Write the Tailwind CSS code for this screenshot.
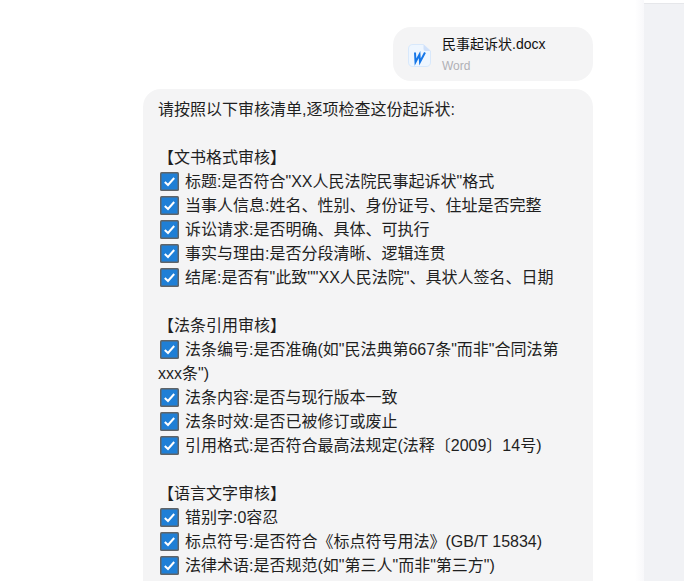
<!DOCTYPE html>
<html lang="en">
<head>
    <meta charset="UTF-8">
    <meta name="viewport" content="width=device-width, initial-scale=1.0">
    <title>民事起诉状审核</title>
    <script src="https://cdn.jsdelivr.net/npm/@tailwindcss/browser@4"></script>
</head>
<body class="h-[581px] overflow-hidden bg-white font-['Liberation_Sans','Noto_Sans_CJK_SC',sans-serif]">
    <svg class="hidden">
        <symbol id="chk" viewBox="0 0 19 19">
            <rect x="0" y="0" width="19" height="19" rx="1.500" fill="#5f6468"/>
            <rect x="1.500" y="1.500" width="16" height="16" rx="0.500" fill="#1f7fd6"/>
            <path d="M4.800 10 L8 13 L14.200 6" fill="none" stroke="#fff" stroke-width="2"/>
        </symbol>
    </svg>
    <div class="flex h-full">
        <main class="w-[635px] shrink-0 pt-[27px] pr-[42px] flex flex-col items-end gap-2">
            <!-- File card -->
            <div class="w-[200px] h-[54px] shrink-0 rounded-[18px] bg-[#f4f4f5] flex items-center pl-[15px] gap-[11px]">
                <svg class="w-[23px] h-[23px] shrink-0 mt-[3px]" viewBox="0 0 23 23">
                    <path d="M5 .500 H15.500 L22.500 7 V18 Q22.500 22.500 18 22.500 H5 Q.500 22.500 .500 18 V5 Q.500 .500 5 .500 Z" fill="#eef6ff" stroke="#d8e8fb"/>
                    <path d="M15.500 .500 L22.500 7 H17.500 Q15.500 7 15.500 5 Z" fill="#cfe0fa"/>
                    <path d="M7 8.500 L7.500 18 L11.500 10.500 L12 18 L17 8.500" fill="none" stroke="#1677e8" stroke-width="2"/>
                </svg>
                <div class="flex flex-col">
                    <span class="text-[14px] leading-[20px] text-[#111]">民事起诉状.docx</span>
                    <span class="text-[12px] leading-[18px] text-[#b0b0b5] mt-[3px]">Word</span>
                </div>
            </div>
            <!-- Message -->
            <div class="w-[450px] shrink-0 rounded-[18px] bg-[#f4f4f5] pt-[9px] pb-[40px] pl-[15px] pr-[16px] text-[16px] leading-[24px] text-[#1f1f1f]">
                <p>请按照以下审核清单,逐项检查这份起诉状:</p>
                <p class="mt-[24px]">【文书格式审核】</p>
                <p><svg class="inline-block w-[19px] h-[19px] ml-[2px] mr-[6px] align-[-4px]"><use href="#chk"/></svg>标题:是否符合"XX人民法院民事起诉状"格式</p>
                <p><svg class="inline-block w-[19px] h-[19px] ml-[2px] mr-[6px] align-[-4px]"><use href="#chk"/></svg>当事人信息:姓名、性别、身份证号、住址是否完整</p>
                <p><svg class="inline-block w-[19px] h-[19px] ml-[2px] mr-[6px] align-[-4px]"><use href="#chk"/></svg>诉讼请求:是否明确、具体、可执行</p>
                <p><svg class="inline-block w-[19px] h-[19px] ml-[2px] mr-[6px] align-[-4px]"><use href="#chk"/></svg>事实与理由:是否分段清晰、逻辑连贯</p>
                <p><svg class="inline-block w-[19px] h-[19px] ml-[2px] mr-[6px] align-[-4px]"><use href="#chk"/></svg>结尾:是否有"此致""XX人民法院"、具状人签名、日期</p>
                <p class="mt-[24px]">【法条引用审核】</p>
                <p><svg class="inline-block w-[19px] h-[19px] ml-[2px] mr-[6px] align-[-4px]"><use href="#chk"/></svg>法条编号:是否准确(如"民法典第667条"而非"合同法第<br>xxx条")</p>
                <p><svg class="inline-block w-[19px] h-[19px] ml-[2px] mr-[6px] align-[-4px]"><use href="#chk"/></svg>法条内容:是否与现行版本一致</p>
                <p><svg class="inline-block w-[19px] h-[19px] ml-[2px] mr-[6px] align-[-4px]"><use href="#chk"/></svg>法条时效:是否已被修订或废止</p>
                <p><svg class="inline-block w-[19px] h-[19px] ml-[2px] mr-[6px] align-[-4px]"><use href="#chk"/></svg>引用格式:是否符合最高法规定(法释〔2009〕14号)</p>
                <p class="mt-[24px]">【语言文字审核】</p>
                <p><svg class="inline-block w-[19px] h-[19px] ml-[2px] mr-[6px] align-[-4px]"><use href="#chk"/></svg>错别字:0容忍</p>
                <p><svg class="inline-block w-[19px] h-[19px] ml-[2px] mr-[6px] align-[-4px]"><use href="#chk"/></svg>标点符号:是否符合《标点符号用法》(GB/T 15834)</p>
                <p><svg class="inline-block w-[19px] h-[19px] ml-[2px] mr-[6px] align-[-4px]"><use href="#chk"/></svg>法律术语:是否规范(如"第三人"而非"第三方")</p>
            </div>
        </main>
        <!-- Side panel -->
        <div class="w-[9px] shrink-0 bg-gradient-to-r from-white to-[#f8f8fa]"></div>
        <aside class="flex-1 mt-[3px] bg-[#f1f2f5] border-t border-[#e6e7ea]"></aside>
    </div>
</body>
</html>
